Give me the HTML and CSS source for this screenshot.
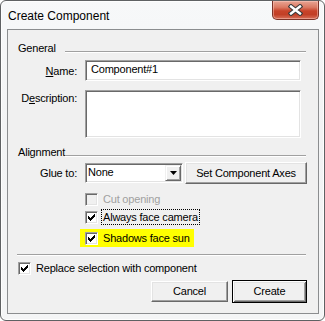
FILE: index.html
```html
<!DOCTYPE html>
<html>
<head>
<meta charset="utf-8">
<title>Create Component</title>
<link rel="stylesheet" href="styles.css">
</head>
<body>
<div class="window">
  <div class="titlebar">
    <span class="title">Create Component</span>
    <div class="close">
      <svg width="15" height="12" viewBox="0 0 15 12">
        <path d="M3 2.5L12 9.5M12 2.5L3 9.5" stroke="#3a3a3a" stroke-width="4.6" stroke-linecap="square"/>
        <path d="M3 2.5L12 9.5M12 2.5L3 9.5" stroke="#fff" stroke-width="2.4" stroke-linecap="square"/>
      </svg>
    </div>
  </div>
  <div class="client">
    <div class="group-head"><span class="group-label">General</span><span class="group-line"></span></div>
    <div class="field-row name-row">
      <span class="field-label"><u>N</u>ame:</span>
      <div class="textbox">Component#1</div>
    </div>
    <div class="field-row desc-row">
      <span class="field-label">D<u>e</u>scription:</span>
      <div class="textbox textarea"></div>
    </div>
    <div class="group-head align-head"><span class="group-label">Alignment</span><span class="group-line"></span></div>
    <div class="field-row glue-row">
      <span class="field-label">Glue to:</span>
      <div class="combo">
        <span class="combo-text">None</span>
        <span class="combo-btn"><svg width="7" height="4" viewBox="0 0 7 4"><path d="M0 0h7L3.5 4z" fill="#000"/></svg></span>
      </div>
      <button class="btn axes-btn">Set Component Axes</button>
    </div>
    <div class="checks">
      <div class="check-row disabled">
        <span class="cb"></span><span class="cb-label">Cut opening</span>
      </div>
      <div class="check-row">
        <span class="cb"><svg width="11" height="11" viewBox="1 1 11 11"><path d="M3 5h1v1h1v1h1v-1h1v-1h1v-1h1v-1h1v3h-1v1h-1v1h-1v1h-1v1h-1v-1h-1v-1h-1z" fill="#000"/></svg></span><span class="cb-label focus">Always face camera</span>
      </div>
      <div class="check-row highlight">
        <span class="cb"><svg width="11" height="11" viewBox="1 1 11 11"><path d="M3 5h1v1h1v1h1v-1h1v-1h1v-1h1v-1h1v3h-1v1h-1v1h-1v1h-1v1h-1v-1h-1v-1h-1z" fill="#000"/></svg></span><span class="cb-label">Shadows face sun</span>
      </div>
    </div>
    <div class="separator"></div>
    <div class="check-row replace">
      <span class="cb"><svg width="11" height="11" viewBox="1 1 11 11"><path d="M3 5h1v1h1v1h1v-1h1v-1h1v-1h1v-1h1v3h-1v1h-1v1h-1v1h-1v1h-1v-1h-1v-1h-1z" fill="#000"/></svg></span><span class="cb-label">Replace selection with component</span>
    </div>
    <div class="buttons">
      <button class="btn cancel-btn">Cancel</button>
      <button class="btn default-btn">Create</button>
    </div>
  </div>
</div>
</body>
</html>
```
FILE: styles.css
```css
html, body {
  margin: 0;
  padding: 0;
  background: #ffffff;
}
body {
  font-family: "Liberation Sans", Arial, sans-serif;
  font-size: 11px;
  letter-spacing: -0.2px;
  color: #000;
}
.window {
  width: 325px;
  height: 321px;
  box-sizing: border-box;
  border: 1px solid #5f6163;
  border-radius: 6px;
  background: linear-gradient(to bottom, #f7f8f9 0%, #f2f3f4 40%, #f4f5f6 100%);
  box-shadow: inset 0 0 0 1px rgba(255, 255, 255, 0.85);
  display: flex;
  flex-direction: column;
}
.titlebar {
  height: 28px;
  display: flex;
  align-items: flex-start;
}
.title {
  flex: 1;
  font-size: 12px;
  letter-spacing: 0;
  line-height: 15px;
  margin: 8px 0 0 7px;
  color: #000;
}
.close {
  width: 47px;
  height: 19px;
  margin-right: 5px;
  box-sizing: border-box;
  border: 1px solid #7b3328;
  border-top: none;
  border-radius: 0 0 5px 5px;
  background: linear-gradient(to bottom, #e8a594 0%, #db7a63 35%, #c8432a 55%, #c23f26 75%, #d8705a 100%);
  box-shadow: inset 0 0 0 1px rgba(255, 210, 200, 0.45);
  display: flex;
  align-items: center;
  justify-content: center;
}
.close svg {
  display: block;
}
.client {
  margin: 0 5px 0 6px;
  height: 285px;
  box-sizing: border-box;
  border: 1px solid #8b8d8f;
  background: #f0f0f0;
  display: flex;
  flex-direction: column;
}
.group-head {
  display: flex;
  align-items: flex-start;
  height: 13px;
  margin: 12px 12px 0 10px;
}
.align-head {
  margin-top: 8px;
}
.group-label {
  width: 47px;
  line-height: 13px;
}
.group-line {
  flex: 1;
  margin-top: 9px;
  border-top: 1px solid #a0a0a0;
  border-bottom: 1px solid #ffffff;
}
.field-row {
  display: flex;
  align-items: flex-start;
}
.field-label {
  width: 69px;
  margin-right: 8px;
  text-align: right;
  line-height: 13px;
}
.name-row {
  margin-top: 5px;
}
.name-row .field-label {
  margin-top: 5px;
}
.desc-row {
  margin-top: 9px;
}
.desc-row .field-label {
  margin-top: 2px;
}
.textbox {
  width: 216px;
  height: 21px;
  box-sizing: border-box;
  background: #fff;
  border: 1px solid;
  border-color: #a0a0a0 #ffffff #ffffff #a0a0a0;
  box-shadow: inset 1px 1px 0 #696969, inset -1px -1px 0 #e3e3e3;
  padding: 2px 4px 0 5px;
  line-height: 13px;
}
.textarea {
  height: 48px;
}
.glue-row {
  margin-top: 3px;
}
.glue-row .field-label {
  margin-top: 5px;
}
.combo {
  width: 98px;
  height: 20px;
  margin-top: 1px;
  box-sizing: border-box;
  background: #fff;
  border: 1px solid;
  border-color: #a0a0a0 #ffffff #ffffff #a0a0a0;
  box-shadow: inset 1px 1px 0 #696969, inset -1px -1px 0 #e3e3e3;
  padding: 1px;
  display: flex;
}
.combo-text {
  flex: 1;
  padding: 1px 0 0 1px;
  line-height: 13px;
}
.combo-btn {
  width: 16px;
  height: 16px;
  box-sizing: border-box;
  background: #f0f0f0;
  border: 1px solid;
  border-color: #f0f0f0 #696969 #696969 #f0f0f0;
  box-shadow: inset 1px 1px 0 #ffffff, inset -1px -1px 0 #a0a0a0;
  display: flex;
  align-items: center;
  justify-content: center;
}
.combo-btn svg {
  display: block;
}
.btn {
  font-family: inherit;
  font-size: 11px;
  letter-spacing: -0.2px;
  line-height: 13px;
  color: #000;
  box-sizing: border-box;
  background: #f0f0f0;
  border: 1px solid;
  border-color: #ffffff #696969 #696969 #ffffff;
  box-shadow: inset -1px -1px 0 #a0a0a0, inset 1px 1px 0 #e3e3e3;
  padding: 0;
  margin: 0;
  border-radius: 0;
}
.axes-btn {
  width: 122px;
  height: 22px;
  margin-left: 2px;
}
.checks {
  display: flex;
  flex-direction: column;
  align-items: flex-start;
  margin: 6px 0 0 72px;
}
.check-row {
  display: flex;
  align-items: flex-start;
  height: 18px;
  box-sizing: border-box;
  padding: 0 2px 0 5px;
}
.highlight {
  background: #ffff00;
  margin-top: 3px;
}
.cb {
  width: 13px;
  height: 13px;
  margin-top: 3px;
  box-sizing: border-box;
  background: #fff;
  border: 1px solid;
  border-color: #a0a0a0 #ffffff #ffffff #a0a0a0;
  box-shadow: inset 1px 1px 0 #696969, inset -1px -1px 0 #e3e3e3;
  flex: none;
}
.cb svg {
  display: block;
}
.cb-label {
  margin: 1px 0 0 3px;
  padding: 0 1px;
  line-height: 14px;
  border: 1px dotted transparent;
  white-space: nowrap;
}
.focus {
  border-color: #000;
}
.disabled .cb {
  background: #f0f0f0;
}
.disabled .cb-label {
  color: #a0a0a0;
}
.separator {
  margin: 7px 12px 0 9px;
  border-top: 1px solid #a0a0a0;
  border-bottom: 1px solid #ffffff;
}
.replace {
  margin: 3px 0 0 5px;
  align-self: flex-start;
}
.buttons {
  display: flex;
  justify-content: flex-end;
  align-items: center;
  gap: 4px;
  margin-top: 3px;
  padding-right: 11px;
  height: 23px;
}
.cancel-btn {
  width: 77px;
  height: 21px;
}
.default-btn {
  width: 75px;
  height: 23px;
  border: 1px solid #000;
  box-shadow: inset 1px 1px 0 #ffffff, inset -1px -1px 0 #696969, inset 2px 2px 0 #e3e3e3, inset -2px -2px 0 #a0a0a0;
}
```
